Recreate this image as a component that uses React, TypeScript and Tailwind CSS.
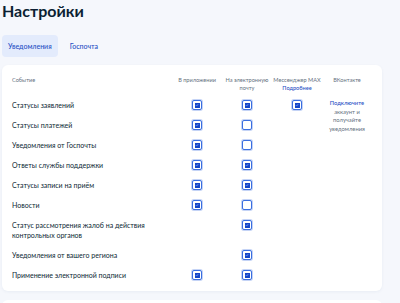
import React from 'react';

type Row = { label: string[]; app?: boolean; email?: boolean; max?: boolean };

const rows: Row[] = [
    { label: ['Статусы заявлений'], app: true, email: true, max: true },
    { label: ['Статусы платежей'], app: true, email: false },
    { label: ['Уведомления от Госпочты'], app: true, email: false },
    { label: ['Ответы службы поддержки'], app: true, email: true },
    { label: ['Статусы записи на приём'], app: true, email: true },
    { label: ['Новости'], app: true, email: false },
    { label: ['Статус рассмотрения жалоб на действия', 'контрольных органов'], email: true },
    { label: ['Уведомления от вашего региона'], email: true },
    { label: ['Применение электронной подписи'], app: true, email: true },
];

const Check = ({ checked }: { checked: boolean }) => (
    <div className="w-[10px] h-[10px] rounded-[2px] border-[1.5px] border-[#3a6ee0] bg-white shadow-[0_0_0_1px_rgba(58,110,224,0.3)] flex items-center justify-center">
        {checked && (
            <div className="w-[5px] h-[5px] bg-[#1546c8] flex items-center justify-center">
                <svg width="4" height="4" viewBox="0 0 10 10" className="block">
                    <path d="M2 5.5 L4 7.5 L8 3" stroke="#8fb0f2" strokeWidth="1.8" fill="none" />
                </svg>
            </div>
        )}
    </div>
);

const Cell = ({ value }: { value?: boolean }) => (
    <div className="flex justify-center pt-[5px] h-full">{value !== undefined && <Check checked={value} />}</div>
);

export default function App() {
    return (
        <div className="w-[400px] h-[303px] overflow-hidden bg-[#f5f7fc] text-[#0b1f33]" style={{ fontFamily: 'Lato, "Noto Sans", sans-serif' }}>
            <div className="pl-[2px] pr-[18px]">
                <h1 className="text-[16px] font-bold leading-[20px] pt-[1px]">Настройки</h1>

                <div className="flex items-center mt-[14px] gap-[12px]">
                    <div className="h-[22px] px-[6px] rounded-[4px] bg-[#e3ebfc] flex items-center text-[7px] text-[#1f4fc4] font-medium">Уведомления</div>
                    <div className="text-[7px] text-[#1f4fc4] font-medium">Госпочта</div>
                </div>

                <div className="mt-[8px] bg-white rounded-[6px] shadow-[0_1px_3px_rgba(30,60,120,0.06)] pl-[10px] pr-[10px] pt-[11px] h-[226px]">
                    <div className="grid grid-cols-[160px_50px_50px_50px_50px] text-[5.6px] leading-[8px] text-[#66727f]">
                        <div>Событие</div>
                        <div className="text-center">В приложении</div>
                        <div className="text-center">На электронную<br />почту</div>
                        <div className="text-center">
                            Мессенджер MAX<br />
                            <span className="text-[#1f4fc4] font-medium">Подробнее</span>
                        </div>
                        <div className="text-center">ВКонтакте</div>
                    </div>

                    <div className="grid grid-cols-[160px_50px_50px_50px_50px] mt-[3px] relative">
                        {rows.map((r, i) => {
                            const h = r.label.length > 1 ? 'h-[30px]' : 'h-[20px]';
                            return (
                                <React.Fragment key={i}>
                                    <div className={`${h} pt-[5px] text-[7px] leading-[10px]`}>
                                        {r.label.map((l, j) => (
                                            <div key={j}>{l}</div>
                                        ))}
                                    </div>
                                    <div className={h}><Cell value={r.app} /></div>
                                    <div className={h}><Cell value={r.email} /></div>
                                    <div className={h}><Cell value={r.max} /></div>
                                    <div className={h} />
                                </React.Fragment>
                            );
                        })}
                        <div className="absolute top-[4px] right-0 w-[50px] text-center text-[5.8px] leading-[8.7px] text-[#66727f]">
                            <span className="text-[#1f4fc4] font-medium">Подключите</span><br />
                            аккаунт и<br />
                            получайте<br />
                            уведомления
                        </div>
                    </div>
                </div>

                <div className="mt-[9px] bg-white rounded-[6px] h-[20px]" />
            </div>
        </div>
    );
}
